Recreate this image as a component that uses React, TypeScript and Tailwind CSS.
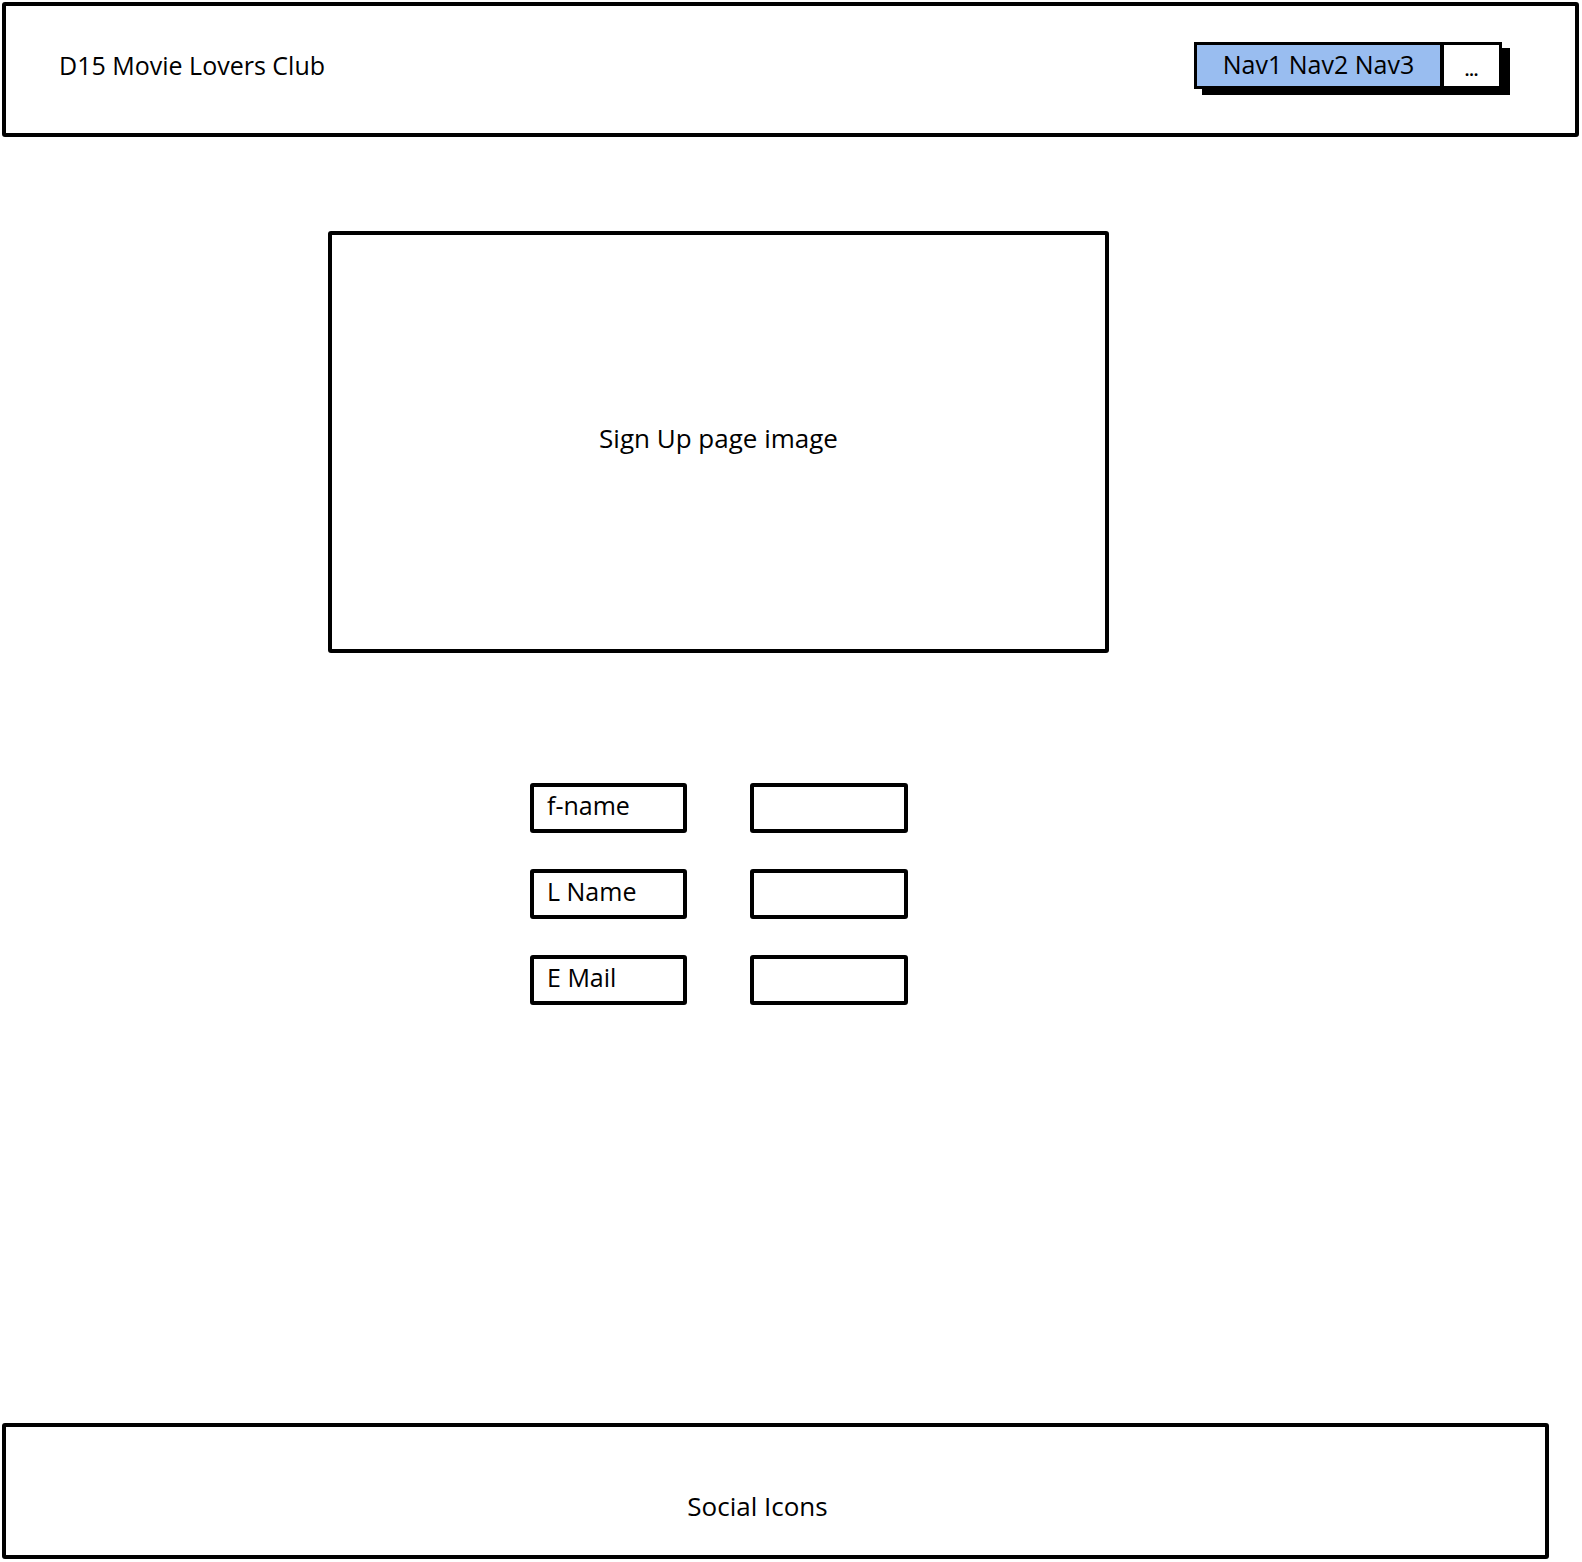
import { FC } from "react";

const font = { fontFamily: "'Open Sans', Lato, sans-serif" };

const labels = ["f-name", "L Name", "E Mail"];

const Header: FC = () => (
	<header className="ml-[2px] mt-[2px] flex h-[135px] w-[1577px] items-center justify-between rounded-[3px] border-[4px] border-black pb-[8px] pl-[53px] pr-[73px]">
		<span className="text-[25px] leading-none text-black">D15 Movie Lovers Club</span>
		<nav className="flex h-[47px] w-[308px] border-[3px] border-black shadow-[8px_6px_0_0_#000]">
			<div className="flex flex-1 items-center justify-center bg-[#99bdf0] pb-[2px] text-[25px] leading-none text-black">
				Nav1 Nav2 Nav3
			</div>
			<div className="flex w-[59px] items-center justify-center border-l-[4px] border-black bg-white pt-[8px] text-[16px] leading-none font-bold">
				...
			</div>
		</nav>
	</header>
);

const SignUpForm: FC = () => (
	<div className="ml-[530px] mt-[130px] flex flex-col gap-[36px]">
		{labels.map(label => (
			<div key={label} className="flex gap-[63px]">
				<div className="flex h-[50px] w-[157px] items-center rounded-[3px] border-[4px] border-black pb-[5px] pl-[13px] text-[25px] leading-none text-black">
					{label}
				</div>
				<div className="h-[50px] w-[158px] rounded-[3px] border-[4px] border-black"></div>
			</div>
		))}
	</div>
);

export default function App() {
	return (
		<div className="min-h-[1562px] w-[1582px] bg-white" style={font}>
			<Header />
			<div className="ml-[328px] mt-[94px] flex h-[422px] w-[781px] items-center justify-center rounded-[3px] border-[4px] border-black pb-[8px] text-[26px] leading-none text-black">
				Sign Up page image
			</div>
			<SignUpForm />
			<footer className="ml-[2px] mt-[418px] flex h-[136px] w-[1547px] items-center justify-center rounded-[3px] border-[4px] border-black pr-[36px] pt-[30px] text-[26px] leading-none text-black">
				Social Icons
			</footer>
		</div>
	);
}
